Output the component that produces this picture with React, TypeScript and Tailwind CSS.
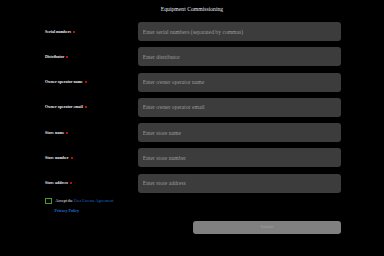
import React from "react";

const fields = [
  { label: "Serial numbers", placeholder: "Enter serial numbers (separated by commas)" },
  { label: "Distributor", placeholder: "Enter distributor" },
  { label: "Owner operator name", placeholder: "Enter owner operator name" },
  { label: "Owner operator email", placeholder: "Enter owner operator email" },
  { label: "Store name", placeholder: "Enter store name" },
  { label: "Store number", placeholder: "Enter store number" },
  { label: "Store address", placeholder: "Enter store address" },
];

export default function App() {
  return (
    <div className="w-[384px] h-[256px] overflow-hidden bg-black font-['Liberation_Serif',serif]">
      <h1 className="pt-[5px] text-center text-[5.7px] leading-[8px] text-[#e6e6f0]">
        Equipment Commissioning
      </h1>

      <div className="mt-[9px] flex flex-col gap-[6.3px] pl-[45px] pr-[43px]">
        {fields.map((f) => (
          <div key={f.label} className="flex items-center">
            <label className="flex w-[93px] items-center text-[4px] font-bold text-[#ececf4]">
              {f.label}
              <span className="ml-[2px] inline-block h-[2px] w-[2px] rounded-full bg-[#ff1010]"></span>
            </label>
            <input
              type="text"
              placeholder={f.placeholder}
              className="h-[19px] flex-1 rounded-[3px] bg-[#3c3c3c] px-[4.7px] text-[5.65px] text-white outline-none placeholder:text-[#9a9a9a]"
            />
          </div>
        ))}
      </div>

      <div className="mt-[5px] flex items-start pl-[45px]">
        <span className="mr-[3.5px] h-[6.5px] w-[7px] border border-[#4f9a2c]"></span>
        <div className="pt-[1.5px] text-[4px] leading-[4px]">
          <div className="text-[#ececf4]">
            Accept the <a className="text-[#1f6fd0]">User License Agreement</a>
          </div>
          <div className="mt-[6px] -ml-[1px] font-bold text-[#1f6fd0]">Privacy Policy</div>
        </div>
      </div>

      <div className="mt-[8px] flex justify-end pr-[43px]">
        <button className="h-[12.6px] w-[148px] rounded-[3px] bg-[#808080] text-[4.5px] text-[#a2a2a2]">
          Submit
        </button>
      </div>
    </div>
  );
}
